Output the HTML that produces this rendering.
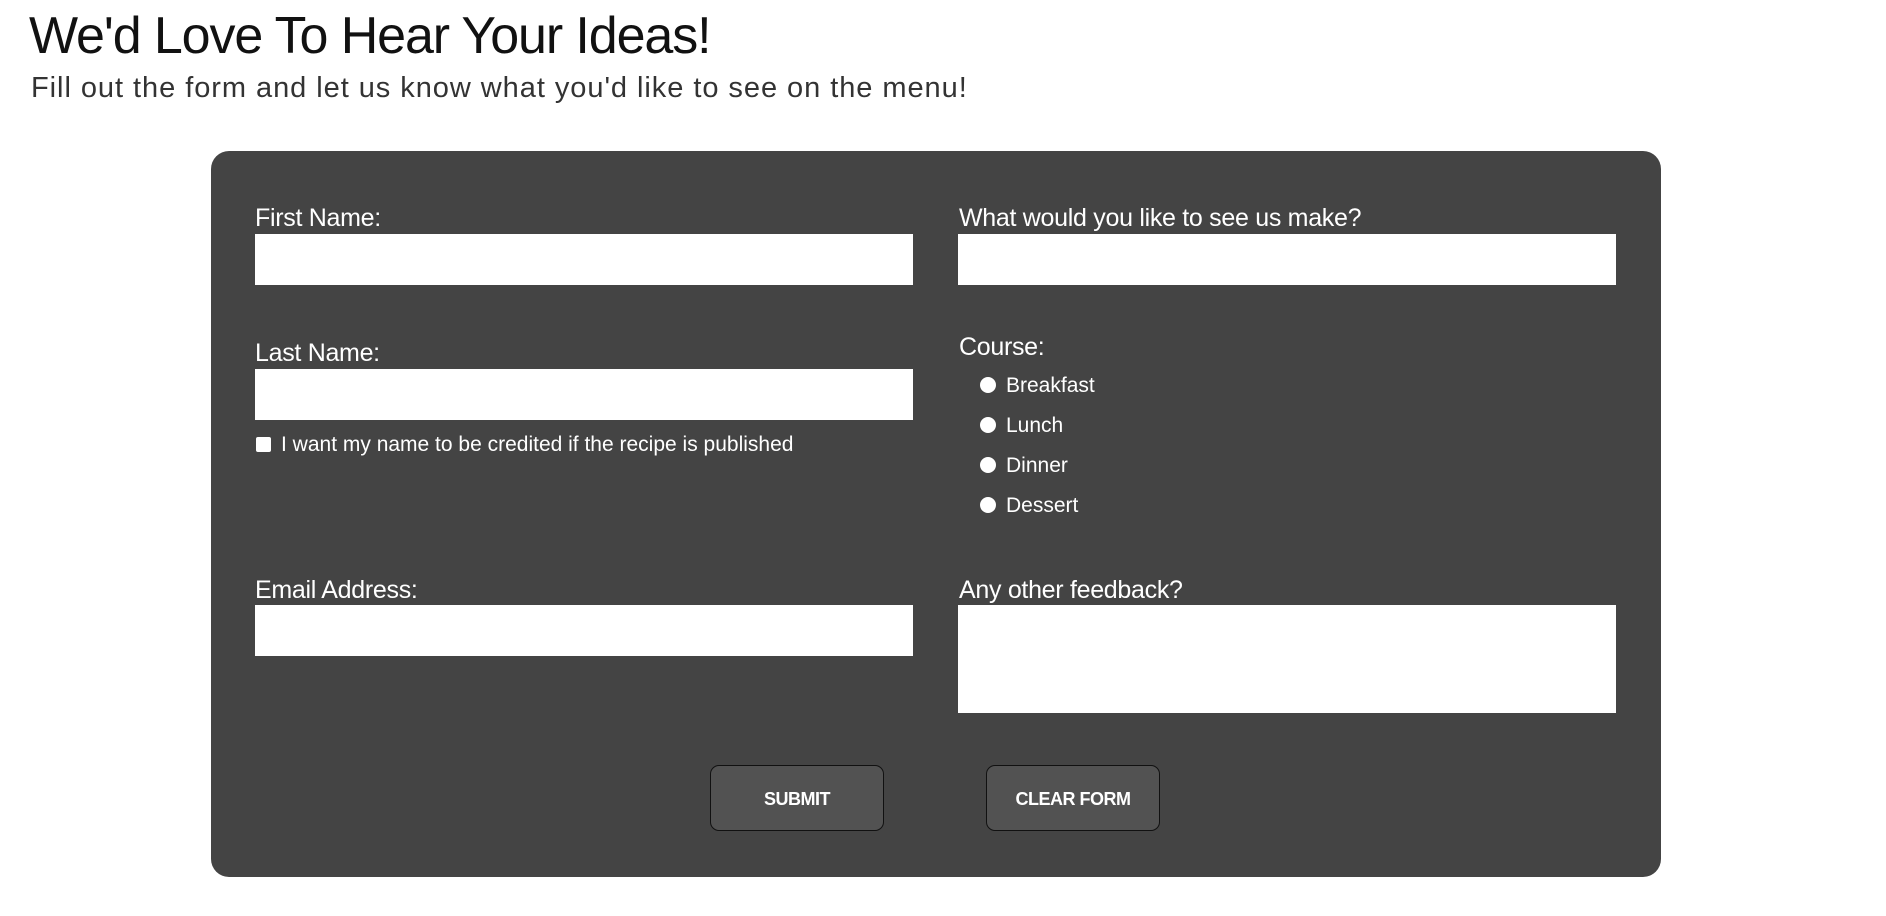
<!DOCTYPE html>
<html><head><meta charset="utf-8"><style>
body{margin:0;width:1886px;height:916px;background:#fff;font-family:"Liberation Sans",sans-serif;position:relative;overflow:hidden}
.a{position:absolute;white-space:nowrap}
h1{position:absolute;left:29px;top:4px;margin:0;font-weight:normal;font-size:52px;line-height:64px;color:#111;letter-spacing:-1.1px}
.sub{left:31px;top:70px;font-size:29px;line-height:36px;color:#333;letter-spacing:0.95px}
.form{position:absolute;left:211px;top:151px;width:1450px;height:726px;background:#444;border-radius:18px}
.lbl{color:#fff;font-size:25px;line-height:30px;letter-spacing:-0.3px}
.in{position:absolute;background:#fff;height:51px}
.opt{color:#fff;font-size:21px;line-height:26px}
.radio{position:absolute;width:16px;height:16px;border-radius:50%;background:#fff}
.btn{position:absolute;top:765px;height:66px;width:174px;background:#525252;border:1px solid #111;border-radius:9px;color:#fff;font-weight:bold;font-size:18px;line-height:66px;text-align:center;box-sizing:border-box;letter-spacing:-0.5px}
</style></head><body>
<h1>We'd Love To Hear Your Ideas!</h1>
<div class="a sub">Fill out the form and let us know what you'd like to see on the menu!</div>
<div class="form"></div>
<div class="a lbl" style="left:255px;top:203px">First Name:</div>
<div class="in" style="left:255px;top:234px;width:658px"></div>
<div class="a lbl" style="left:255px;top:338px">Last Name:</div>
<div class="in" style="left:255px;top:369px;width:658px"></div>
<div style="position:absolute;left:256px;top:437px;width:15px;height:15px;background:#fff;border-radius:2px"></div>
<div class="a opt" style="left:281px;top:432px">I want my name to be credited if the recipe is published</div>
<div class="a lbl" style="left:255px;top:575px">Email Address:</div>
<div class="in" style="left:255px;top:605px;width:658px"></div>
<div class="a lbl" style="left:959px;top:203px">What would you like to see us make?</div>
<div class="in" style="left:958px;top:234px;width:658px"></div>
<div class="a lbl" style="left:959px;top:332px">Course:</div>
<div class="radio" style="left:980px;top:377px"></div><div class="a opt" style="left:1006px;top:373px">Breakfast</div>
<div class="radio" style="left:980px;top:417px"></div><div class="a opt" style="left:1006px;top:413px">Lunch</div>
<div class="radio" style="left:980px;top:457px"></div><div class="a opt" style="left:1006px;top:453px">Dinner</div>
<div class="radio" style="left:980px;top:497px"></div><div class="a opt" style="left:1006px;top:493px">Dessert</div>
<div class="a lbl" style="left:959px;top:575px">Any other feedback?</div>
<div class="in" style="left:958px;top:605px;width:658px;height:108px"></div>
<div class="btn" style="left:710px">SUBMIT</div>
<div class="btn" style="left:986px">CLEAR FORM</div>
</body></html>
